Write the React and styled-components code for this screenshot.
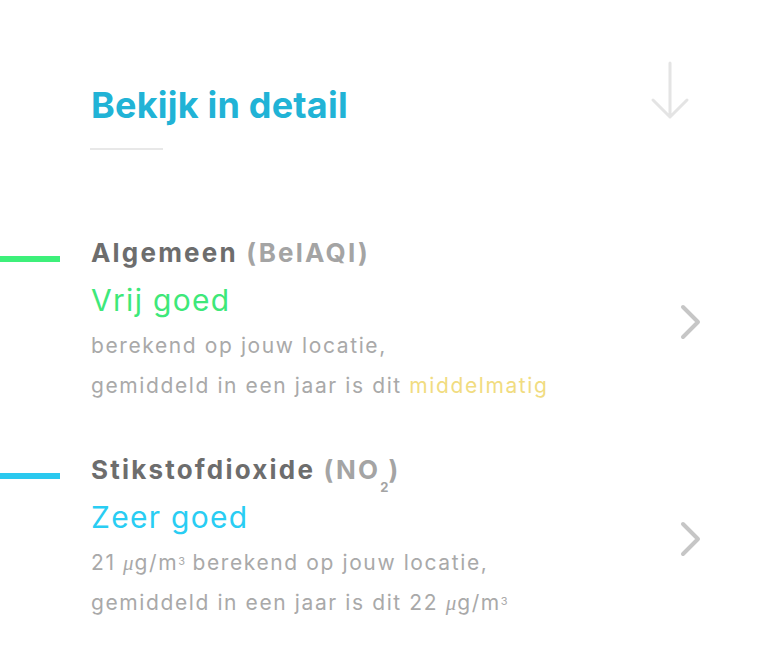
import React from "react";
import styled, { createGlobalStyle } from "styled-components";

const GlobalStyle = createGlobalStyle`
  html, body {
    margin: 0;
    padding: 0;
    background: #ffffff;
  }
  body {
    font-family: Inter, "Noto Sans", sans-serif;
    -webkit-font-smoothing: antialiased;
  }
`;

// built lazily so the styled parts below exist by the time it runs
const getItems = () => [
  {
    id: "belaqi",
    name: "Algemeen",
    code: <>(BelAQI)</>,
    status: "Vrij goed",
    color: "#3ee879",
    barColor: "#3df07a",
    lines: [
      <>berekend op jouw locatie,</>,
      <>
        gemiddeld in een jaar is dit <Highlight>middelmatig</Highlight>
      </>,
    ],
  },
  {
    id: "no2",
    name: "Stikstofdioxide",
    code: (
      <>
        (NO<Sub>2</Sub>)
      </>
    ),
    status: "Zeer goed",
    color: "#29cdf3",
    barColor: "#2ac9ef",
    lines: [
      <>
        21 <Mu>μ</Mu>g/m<Sup>3</Sup> berekend op jouw locatie,
      </>,
      <>
        gemiddeld in een jaar is dit 22 <Mu>μ</Mu>g/m<Sup>3</Sup>
      </>,
    ],
  },
];

export default function App() {
  const items = getItems();
  return (
    <>
      <GlobalStyle />
      <Page>
        <Header>
          <Heading>Bekijk in detail</Heading>
          <ArrowDown viewBox="0 0 40 62" aria-hidden="true">
            <path d="M20 3 V57 M3 40 L20 57 L37 40" />
          </ArrowDown>
        </Header>
        <Divider />
        <List>
          {items.map((item) => (
            <Item key={item.id}>
              <Bar $color={item.barColor} />
              <Body>
                <Title>
                  {item.name} <Code>{item.code}</Code>
                </Title>
                <Status $color={item.color}>{item.status}</Status>
                <Lines>
                  {item.lines.map((line, i) => (
                    <Line key={i}>{line}</Line>
                  ))}
                </Lines>
              </Body>
              <Chevron viewBox="0 0 24 36" aria-hidden="true">
                <path d="M6 3 L21 18 L6 33" />
              </Chevron>
            </Item>
          ))}
        </List>
      </Page>
    </>
  );
}

const Page = styled.div`
  width: 759px;
  min-height: 651px;
  padding: 60px 58px 0 0;
  box-sizing: border-box;
`;

const Header = styled.div`
  display: flex;
  justify-content: space-between;
  align-items: flex-start;
  padding-left: 91px;
  padding-right: 11px;
`;

const Heading = styled.h2`
  margin: 23px 0 0;
  font-size: 36px;
  line-height: 44px;
  font-weight: 700;
  letter-spacing: 0.2px;
  color: #21b3d6;
`;

const ArrowDown = styled.svg`
  width: 40px;
  height: 62px;
  fill: none;
  stroke: #e4e4e4;
  stroke-width: 3;
  stroke-linecap: round;
  stroke-linejoin: round;
`;

const Divider = styled.div`
  width: 73px;
  height: 2px;
  margin: 21px 0 0 90px;
  background: #e8e8e8;
`;

const List = styled.div`
  display: flex;
  flex-direction: column;
  gap: 48px;
  margin-top: 87px;
`;

const Item = styled.div`
  display: grid;
  grid-template-columns: 60px 1fr auto;
  column-gap: 31px;
  align-items: center;
`;

const Bar = styled.div`
  align-self: start;
  height: 6px;
  margin-top: 19px;
  background: ${(p) => p.$color};
`;

const Body = styled.div`
  display: flex;
  flex-direction: column;
`;

const Title = styled.div`
  font-size: 26px;
  line-height: 32px;
  font-weight: 700;
  letter-spacing: 2.2px;
  color: #6d6d6d;
  white-space: nowrap;
`;

const Code = styled.span`
  color: #a4a4a4;
`;

const Sub = styled.span`
  position: relative;
  top: 13px;
  font-size: 13px;
  line-height: 0;
  letter-spacing: 0;
`;

const Status = styled.div`
  margin-top: 11px;
  font-size: 30px;
  line-height: 40px;
  font-weight: 400;
  letter-spacing: 1.3px;
  color: ${(p) => p.$color};
`;

const Lines = styled.div`
  display: flex;
  flex-direction: column;
  margin-top: 6px;
`;

const Line = styled.div`
  font-size: 21px;
  line-height: 40px;
  letter-spacing: 1.6px;
  color: #a9a9a9;
  white-space: nowrap;
`;

const Highlight = styled.span`
  color: #f1dc80;
`;

const Mu = styled.span`
  font-family: "Liberation Serif", serif;
  font-style: italic;
  font-size: 21px;
  letter-spacing: 0;
  margin-right: 1px;
`;

const Sup = styled.span`
  position: relative;
  top: -5px;
  font-size: 11px;
  line-height: 0;
  letter-spacing: 0;
`;

const Chevron = styled.svg`
  width: 24px;
  height: 36px;
  fill: none;
  stroke: #c6c6c6;
  stroke-width: 4;
  stroke-linecap: round;
  stroke-linejoin: round;
`;
